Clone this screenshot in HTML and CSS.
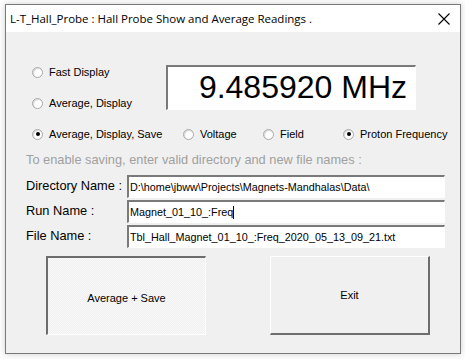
FILE: index.html
```html
<!DOCTYPE html>
<html>
<head>
<meta charset="utf-8">
<link rel="stylesheet" href="styles.css">
</head>
<body>
<div class="window">
  <div class="titlebar">
    <span class="title">L-T_Hall_Probe : Hall Probe Show and Average Readings .</span>
    <svg class="close" width="12" height="12" viewBox="0 0 12 12"><path d="M0.5 0.5 L11.5 11.5 M11.5 0.5 L0.5 11.5" stroke="#000" stroke-width="1.1" fill="none"/></svg>
  </div>
  <div class="content">
    <div class="top">
      <div class="modes">
        <div class="radio"><span class="dot"></span><span>Fast Display</span></div>
        <div class="radio"><span class="dot"></span><span>Average, Display</span></div>
      </div>
      <div class="display">9.485920 MHz</div>
    </div>
    <div class="row3">
      <div class="radio w1"><span class="dot on"></span><span>Average, Display, Save</span></div>
      <div class="radio w2"><span class="dot"></span><span>Voltage</span></div>
      <div class="radio w2"><span class="dot"></span><span>Field</span></div>
      <div class="radio"><span class="dot on"></span><span>Proton Frequency</span></div>
    </div>
    <div class="hint">To enable saving, enter valid directory and new file names :</div>
    <div class="form">
      <div class="frow"><span class="lbl">Directory Name :</span><div class="field">D:\home\jbww\Projects\Magnets-Mandhalas\Data\</div></div>
      <div class="frow"><span class="lbl">Run Name :</span><div class="field">Magnet_01_10_:Freq<span class="caret"></span></div></div>
      <div class="frow"><span class="lbl">File Name :</span><div class="field">Tbl_Hall_Magnet_01_10_:Freq_2020_05_13_09_21.txt</div></div>
    </div>
    <div class="buttons">
      <div class="btn pressed">Average + Save</div>
      <div class="btn raised">Exit</div>
    </div>
  </div>
</div>
</body>
</html>
```

FILE: styles.css
```css
html, body { margin: 0; padding: 0; }
body {
  width: 465px; height: 359px; background: #fdfdfd; overflow: hidden;
  font-family: "Liberation Sans", Arial, sans-serif;
}
.window {
  margin: 4px 0 0 5px;
  width: 456px; height: 350px; box-sizing: border-box;
  border: 1px solid #7a7a7a;
  background: #f0f0f0;
  box-shadow: 0 0 6px rgba(0,0,0,0.18);
  display: flex; flex-direction: column;
}
.titlebar {
  height: 27px; background: #fff;
  display: flex; align-items: center; justify-content: space-between;
  padding: 0 10px 0 4px;
}
.title { font-family: "Open Sans", "Noto Sans", sans-serif; font-size: 11.5px; color: #000; letter-spacing: -0.02px; }
.close { margin-top: 1px; }
.content { flex: 1; font-size: 11px; color: #000; }
.top { display: flex; margin-top: 33px; }
.modes { width: 134px; padding-left: 26px; display: flex; flex-direction: column; gap: 17px; }
.radio { display: flex; align-items: center; height: 14px; }
.dot {
  width: 11px; height: 11px; border-radius: 50%; box-sizing: border-box;
  border: 1px solid #a8a8a8; background: #fff;
  box-shadow: inset 1px 1px 1px #d8d8d8;
  margin-right: 6px; display: flex; align-items: center; justify-content: center;
}
.dot.on::after { content: ""; width: 4px; height: 4px; border-radius: 50%; background: #000; }
.display {
  width: 250px; height: 45px; box-sizing: border-box;
  border-top: 2px solid #7a7a7a; border-left: 2px solid #7a7a7a;
  border-bottom: 1px solid #fff; border-right: 1px solid #fff;
  background: #fff;
  font-size: 32px; line-height: 40px; text-align: right; padding-right: 8px;
}
.row3 { display: flex; margin-top: 17px; padding-left: 26px; }
.w1 { width: 151px; }
.w2 { width: 80px; }
.hint { margin-top: 12px; padding-left: 20px; font-size: 12.8px; line-height: 14px; color: #a0a0a0; }
.form { margin-top: 8px; display: flex; flex-direction: column; gap: 2px; }
.frow { display: flex; align-items: center; padding-left: 20px; }
.lbl { width: 101px; font-size: 12.8px; margin-top: -2px; }
.field {
  width: 318px; height: 23px; box-sizing: border-box;
  border-top: 2px solid #7a7a7a; border-left: 2px solid #7a7a7a;
  border-bottom: 1px solid #fff; border-right: 1px solid #fff;
  background: #fff; padding-left: 1px; line-height: 19px; font-size: 10.8px;
  display: flex; align-items: center;
}
.caret { width: 1px; height: 13px; background: #000; margin-left: 0; }
.buttons { display: flex; margin-top: 8px; padding-left: 40px; gap: 64px; }
.btn {
  width: 160px; height: 79px; box-sizing: border-box;
  display: flex; align-items: center; justify-content: center; font-size: 11px;
}
.pressed {
  border-top: 2px solid #6d6d6d; border-left: 2px solid #6d6d6d;
  border-bottom: 1px solid #fff; border-right: 1px solid #fff;
  background: repeating-conic-gradient(#f0f0f0 0 25%, #f9f9f9 0 50%) 0 0 / 2px 2px;
  padding-top: 4px;
}
.raised {
  border-top: 1px solid #fff; border-left: 1px solid #fff;
  border-bottom: 2px solid #6d6d6d; border-right: 2px solid #6d6d6d;
  background: #f0f0f0;
}
```
